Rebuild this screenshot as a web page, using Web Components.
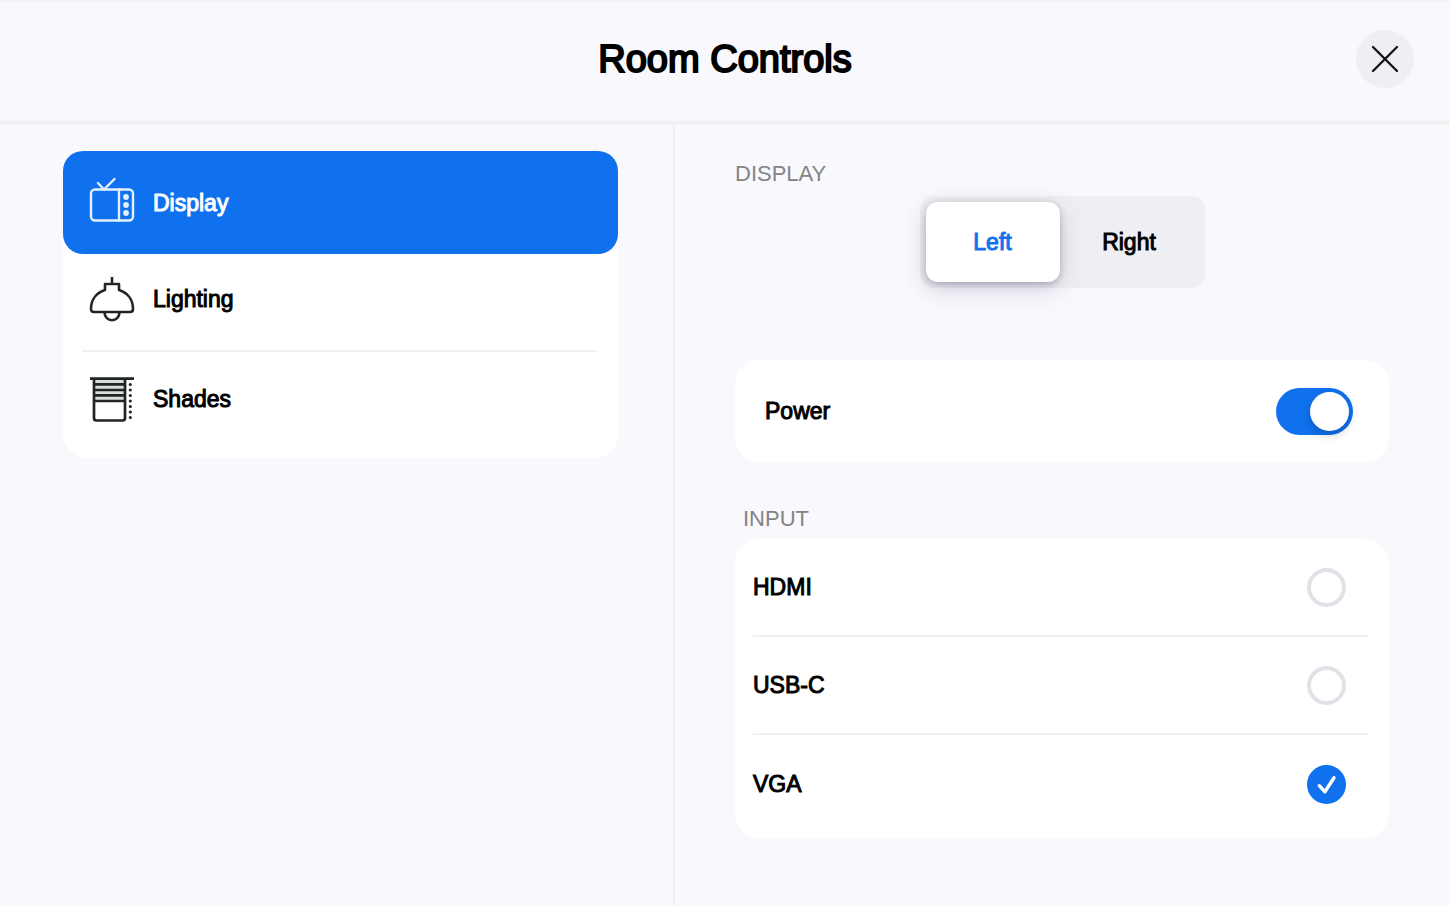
<!DOCTYPE html>
<html lang="en">
<head>
<meta charset="utf-8">
<meta name="viewport" content="width=device-width, initial-scale=1">
<title>Room Controls</title>
<style>
  :root {
    --accent: #1071ee;
    --page: #f8f8fd;
    --line: #f0f0f3;
    --track: #efeff3;
    --muted: #848486;
  }
  html, body { height: 100%; }
  body {
    margin: 0;
    background: var(--page);
    color: #000;
    font: 23px/28px "Liberation Sans", Arial, sans-serif;
  }
</style>
</head>
<body>
<room-controls>
  <span slot="title">Room Controls</span>
  <nav-list slot="nav">
    <nav-item active>
      <svg slot="icon" width="46" height="52" viewBox="0 0 46 52" fill="none" stroke="#e4effd" stroke-width="2.4" stroke-linecap="round" stroke-linejoin="round">
        <rect x="2" y="12.5" width="42" height="31" rx="4"/>
        <path d="M30 12.5V43.500M9 6l6 6.500L25.500 2"/>
        <g fill="#e4effd" stroke="none"><circle cx="37" cy="20" r="2.9"/><circle cx="37" cy="28" r="2.9"/><circle cx="37" cy="36" r="2.9"/></g>
      </svg>
      Display
    </nav-item>
    <nav-item divided>
      <svg slot="icon" width="46" height="46" viewBox="0 0 46 46" fill="none" stroke="#222426" stroke-width="2.6" stroke-linejoin="round">
        <path d="M23 1v7M16 8h14v6c8 2.5 14 9 14 19q0 3-3 3H5q-3 0-3-3c0-10 6-16.5 14-19z"/>
        <path d="M15.500 36c0 11 15 11 15 0"/>
      </svg>
      Lighting
    </nav-item>
    <nav-item last>
      <svg slot="icon" width="46" height="46" viewBox="0 0 46 46" fill="none" stroke="#222426" stroke-width="2.7">
        <path fill="#d9dddd" stroke="none" d="M5 2h31v23H5z"/>
        <path d="M1 2.700h44M5 2v40q0 2.500 2.500 2.500h26q2.500 0 2.500-2.500V2M5 8.300h31M5 14h31M5 19.300h31M5 25h31"/>
        <path d="M41.300 8.500v33.100" stroke-width="3.2" stroke-linecap="round" stroke-dasharray="0 5.500"/>
      </svg>
      Shades
    </nav-item>
  </nav-list>
  <settings-section heading="DISPLAY">
    <segmented-control options="Left,Right"></segmented-control>
  </settings-section>
  <settings-section class="power">
    <toggle-row checked>Power</toggle-row>
  </settings-section>
  <settings-section heading="INPUT" inset>
    <input-picker options="HDMI,USB-C,VGA" value="VGA"></input-picker>
  </settings-section>
</room-controls>

<script>
const define = (name, html, setup) => {
  const template = document.createElement('template');
  template.innerHTML = html;
  customElements.define(name, class extends HTMLElement {
    constructor() {
      super();
      this.attachShadow({ mode: 'open' }).append(template.content.cloneNode(true));
    }
    connectedCallback() {
      if (setup && !this.ready) { this.ready = true; setup(this, this.shadowRoot); }
    }
  });
};

define('room-controls', `
  <style>
    :host { display: flex; flex-direction: column; min-height: 100vh; box-sizing: border-box; border-top: 2px solid #f3f3f7; background: var(--page); }
    header { display: grid; grid-template-columns: 1fr auto 1fr; align-items: center; padding: 28px 36px 33px; border-bottom: 3px solid var(--line); }
    h1 { grid-column: 2; margin: 0; font-size: 38px; line-height: 44px; font-weight: 400; -webkit-text-stroke: 2px #000; }
    button { justify-self: end; display: grid; place-items: center; width: 58px; height: 58px; padding: 0; border: 0; border-radius: 50%; background: var(--track); }
    .body { flex: 1; display: grid; grid-template-columns: 675fr 775fr; }
    nav { padding: 27px 55px 27px 63px; border-right: 2px solid var(--line); }
    main { padding: 36px 61px 36px 60px; min-width: 0; }
  </style>
  <header>
    <h1><slot name="title"></slot></h1>
    <button type="button" aria-label="Close">
      <svg width="28" height="28" viewBox="0 0 28 28" stroke="#111" stroke-width="2.3" stroke-linecap="round"><path d="M2 2l24 24M26 2L2 26"/></svg>
    </button>
  </header>
  <div class="body">
    <nav><slot name="nav"></slot></nav>
    <main><slot></slot></main>
  </div>`);

define('nav-list', `
  <style>:host { display: block; background: #fff; border-radius: 24px; }</style>
  <slot></slot>`);

define('nav-item', `
  <style>
    :host { display: block; }
    button { display: flex; align-items: center; gap: 18px; width: 100%; height: 96px; padding: 0 26px 6px; border: 0; background: none; color: #000; font: inherit; text-align: left; -webkit-text-stroke: 1px currentColor; }
    :host([active]) button { height: 103px; padding-bottom: 0; border-radius: 20px; background: var(--accent); color: #fff; }
    :host([divided])::after { content: ""; display: block; height: 2px; margin: 0 21px 0 19px; background: var(--line); }
    :host([last]) button { height: 106px; padding-bottom: 12px; }
    ::slotted(svg) { display: block; flex: none; }
  </style>
  <button type="button"><slot name="icon"></slot><span><slot></slot></span></button>`);

define('settings-section', `
  <style>
    :host { display: block; }
    :host(.power) { margin: 72px 0 43px; }
    h2 { margin: 0 0 8px; color: var(--muted); font-size: 22px; line-height: 28px; font-weight: 400; }
    :host([inset]) h2 { margin: 0 8px 6px; }
  </style>
  <slot></slot>`, (host, root) => {
  if (!host.hasAttribute('heading')) return;
  const h = document.createElement('h2');
  h.textContent = host.getAttribute('heading');
  root.querySelector('slot').before(h);
});

define('segmented-control', `
  <style>
    :host { display: flex; width: fit-content; margin: 0 auto; padding: 6px; border-radius: 14px; background: var(--track); }
    button { width: 134px; height: 80px; padding: 0; border: 0; border-radius: 12px; background: none; color: #000; font: inherit; -webkit-text-stroke: 1px currentColor; }
    button + button { width: 139px; }
    button[aria-pressed="true"] { background: #fff; color: var(--accent); box-shadow: 0 6px 24px rgba(40, 40, 80, .2), 0 2px 6px rgba(40, 40, 60, .26); }
  </style>`, (host, root) => {
  host.getAttribute('options').split(',').forEach((text, i) => {
    const b = document.createElement('button');
    b.type = 'button';
    b.textContent = text;
    b.setAttribute('aria-pressed', String(i === 0));
    b.addEventListener('click', () => root.querySelectorAll('button').forEach(x => x.setAttribute('aria-pressed', String(x === b))));
    root.append(b);
  });
});

define('toggle-row', `
  <style>
    :host { display: block; background: #fff; border-radius: 24px; }
    label { display: flex; align-items: center; justify-content: space-between; height: 102px; padding: 0 36px 0 30px; -webkit-text-stroke: 1px #000; }
    input { appearance: none; display: flex; align-items: center; box-sizing: border-box; width: 77px; height: 47px; margin: 0; padding: 4px; border-radius: 24px; background: #e1e1e8; }
    input::before { content: ""; width: 39px; height: 39px; border-radius: 50%; background: #fff; box-shadow: 0 4px 10px rgba(0, 0, 0, .2); }
    input:checked { justify-content: flex-end; background: var(--accent); }
  </style>
  <label for="switch"><slot></slot><input id="switch" type="checkbox" role="switch"></label>`, (host, root) => {
  root.querySelector('input').checked = host.hasAttribute('checked');
});

define('input-picker', `
  <style>
    :host { display: block; padding: 0 21px 5px 18px; border-radius: 24px; background: #fff; }
    label { display: flex; align-items: center; justify-content: space-between; height: 96px; padding-right: 22px; border-bottom: 2px solid var(--line); -webkit-text-stroke: 1px #000; }
    label:last-child { height: 98px; border: 0; }
    .mark { display: grid; place-items: center; }
    input, svg { grid-area: 1 / 1; }
    input { appearance: none; box-sizing: border-box; width: 39px; height: 39px; margin: 0; border: 4px solid #e1e1e8; border-radius: 50%; background: #fff; }
    input:checked { border-color: var(--accent); background: var(--accent); }
    svg { pointer-events: none; visibility: hidden; }
    input:checked + svg { visibility: visible; }
  </style>`, (host, root) => {
  host.getAttribute('options').split(',').forEach((text, i) => {
    const label = document.createElement('label');
    label.htmlFor = 'source-' + i;
    label.innerHTML = `<span>${text}</span><span class="mark"><input type="radio" name="source" id="source-${i}">
      <svg width="39" height="39" viewBox="0 0 39 39" fill="none" stroke="#fff" stroke-width="3.4" stroke-linecap="round" stroke-linejoin="round"><path d="M12.3 20.700l5.600 6.100L27 12.800"/></svg></span>`;
    label.querySelector('input').checked = text === host.getAttribute('value');
    root.append(label);
  });
});
</script>
</body>
</html>
